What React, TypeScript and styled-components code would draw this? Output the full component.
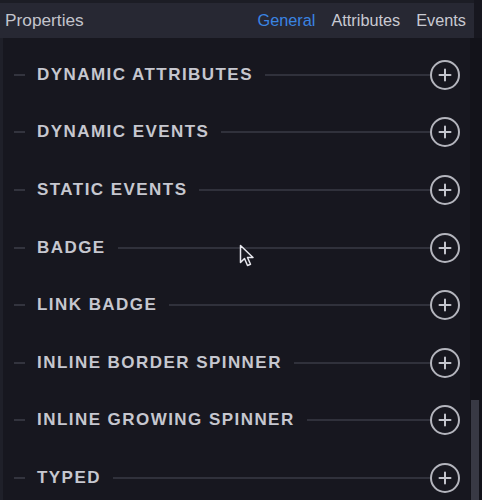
import React from 'react'
import styled, { createGlobalStyle } from 'styled-components'

const Global = createGlobalStyle`
  html, body {
    margin: 0;
    padding: 0;
    background: #17171f;
  }
`

const Panel = styled.div`
  position: relative;
  width: 482px;
  height: 500px;
  overflow: hidden;
  display: flex;
  flex-direction: column;
  background: #17171f;
  font-family: "Liberation Sans", Arial, sans-serif;
`

const Header = styled.div`
  height: 35px;
  border-top: 3px solid #1c1d25;
  margin-right: 8px;
  background: #272833;
  display: flex;
  align-items: center;
  justify-content: space-between;
  padding: 0 8px 0 5px;
  flex-shrink: 0;
`

const Title = styled.div`
  font-size: 17.3px;
  color: #c3c4cc;
`

const Tabs = styled.div`
  display: flex;
  gap: 16px;
`

const Tab = styled.div<{ $active?: boolean }>`
  font-size: 16.3px;
  color: ${p => (p.$active ? '#3a84e2' : '#c9cad2')};
`

const Body = styled.div`
  flex: 1;
  display: flex;
  border-left: 3px solid #1f2029;
`

const List = styled.div`
  flex: 1;
  padding: 8px 10px 0 11px;
`

const Row = styled.div`
  height: 57.6px;
  display: flex;
  align-items: center;
`

const Dash = styled.div`
  width: 11px;
  height: 2px;
  background: #33343e;
`

const Label = styled.div`
  margin-left: 12px;
  font-size: 17px;
  font-weight: bold;
  letter-spacing: 1.45px;
  color: #c6c7cf;
`

const Rule = styled.div`
  flex: 1;
  height: 2px;
  margin-left: 12px;
  background: #30313b;
`

const AddButton = styled.div`
  width: 26px;
  height: 26px;
  border: 2px solid #b4b5bd;
  border-radius: 50%;
  display: flex;
  align-items: center;
  justify-content: center;
  flex-shrink: 0;
`

const Track = styled.div`
  width: 12px;
  display: flex;
  flex-direction: column;
  justify-content: flex-end;
  background: #13131a;
`

const Thumb = styled.div`
  height: 107px;
  margin: 0 3px 0 1px;
  background: #383944;
`

const Cursor = styled.svg`
  position: absolute;
  left: 239px;
  top: 244px;
`

const items = [
  'DYNAMIC ATTRIBUTES',
  'DYNAMIC EVENTS',
  'STATIC EVENTS',
  'BADGE',
  'LINK BADGE',
  'INLINE BORDER SPINNER',
  'INLINE GROWING SPINNER',
  'TYPED',
]

export default function App() {
  return (
    <Panel>
      <Global />
      <Header>
        <Title>Properties</Title>
        <Tabs>
          <Tab $active>General</Tab>
          <Tab>Attributes</Tab>
          <Tab>Events</Tab>
        </Tabs>
      </Header>
      <Body>
        <List>
          {items.map(name => (
            <Row key={name}>
              <Dash />
              <Label>{name}</Label>
              <Rule />
              <AddButton>
                <svg width="14" height="14" viewBox="0 0 14 14">
                  <path d="M7 1.5v11M1.5 7h11" stroke="#c4c5cd" strokeWidth="2" strokeLinecap="round" />
                </svg>
              </AddButton>
            </Row>
          ))}
        </List>
        <Track>
          <Thumb />
        </Track>
      </Body>
      <Cursor width="16" height="24" viewBox="0 0 16 24">
        <path
          d="M1.5 1.5v17l4-4 3 7 3-1.3-3-6.7h5.5z"
          fill="#1a1a22"
          stroke="#e8e8ee"
          strokeWidth="1.5"
          strokeLinejoin="round"
        />
      </Cursor>
    </Panel>
  )
}
